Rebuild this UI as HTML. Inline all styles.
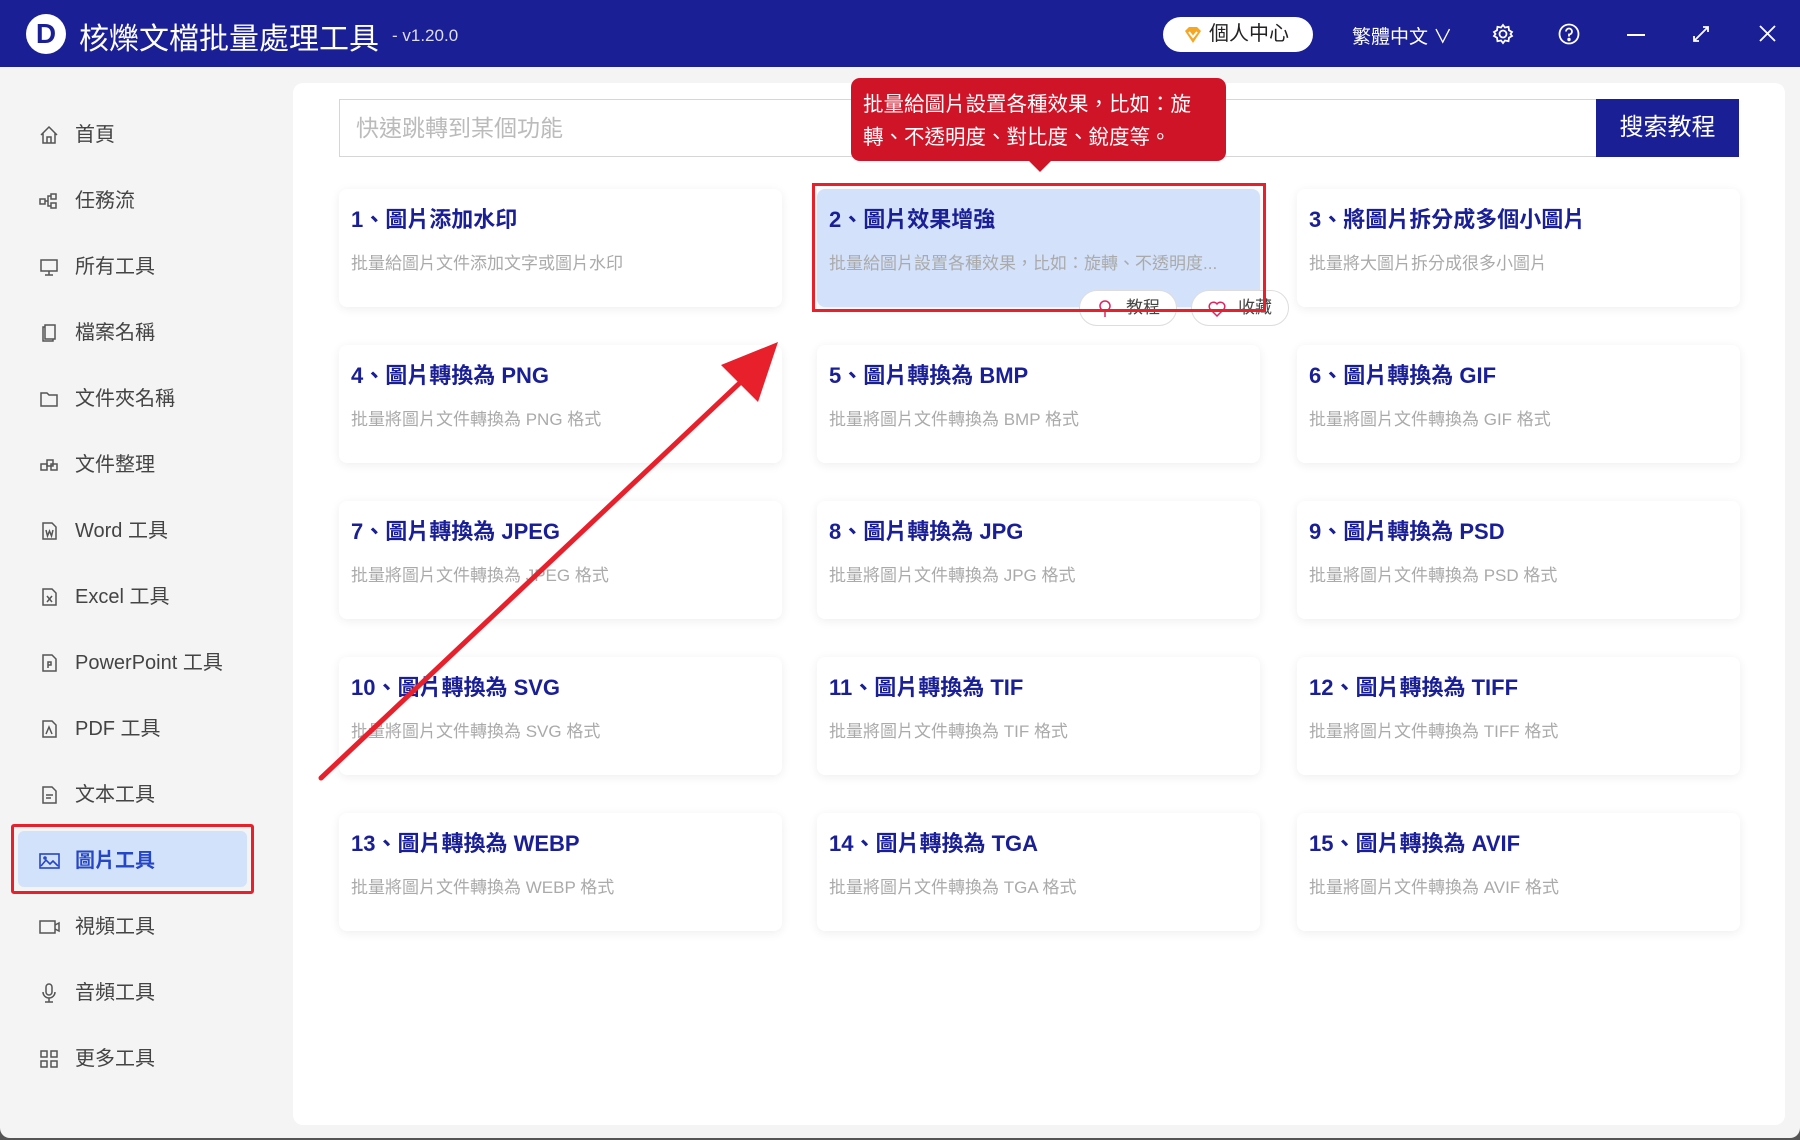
<!DOCTYPE html>
<html><head><meta charset="utf-8"><style>
*{margin:0;padding:0;box-sizing:border-box}
body{width:1800px;height:1140px;overflow:hidden;background:#555;font-family:"Liberation Sans","Noto Sans CJK TC",sans-serif;position:relative}
.win{position:absolute;left:0;top:0;width:1800px;height:1138px;background:#f4f4f4;border-radius:0 0 10px 10px;overflow:hidden}
.hdr{position:absolute;left:0;top:0;width:1800px;height:67px;background:#1a1f96;color:#fff}
.logo{position:absolute;left:26px;top:14px;width:40px;height:40px;border-radius:50%;background:#fff;color:#1a1f96;font-weight:bold;font-size:28px;text-align:center;line-height:40px}
.title{position:absolute;left:79px;top:14px;font-size:30px;color:#fff}
.ver{position:absolute;left:392px;top:26px;font-size:17px;color:#dde}
.pill{position:absolute;left:1163px;top:17px;width:150px;height:35px;border-radius:18px;background:#fff;color:#222;font-size:20px;line-height:35px;padding-left:46px}
.lang{position:absolute;left:1352px;top:22px;font-size:19px;color:#fff}
.side{position:absolute;left:0;top:67px;width:255px;height:1080px}
.it{position:absolute;left:0;width:255px;height:40px;font-size:20px;color:#444;line-height:40px}
.it .t{position:absolute;left:75px}
.it svg{position:absolute;left:39px;top:10px}
.sel{position:absolute;left:11px;top:824px;width:243px;height:70px;border:3px solid #e8202c;border-radius:3px}
.sel div{position:absolute;inset:4px;background:#d3e2fb;border-radius:6px}
.main{position:absolute;left:293px;top:83px;width:1492px;height:1042px;background:#fff;border-radius:10px}
.search{position:absolute;left:339px;top:99px;width:1258px;height:58px;border:1px solid #d6d6d6;border-right:none;font-size:23px;color:#bbb;line-height:56px;padding-left:16px}
.btn{position:absolute;left:1596px;top:99px;width:143px;height:58px;background:#1a1f96;color:#fff;font-size:24px;text-align:center;line-height:58px}
.card{position:absolute;width:443px;height:118px;background:#fff;border-radius:8px;box-shadow:0 2px 10px rgba(0,0,0,.07)}
.card .h{position:absolute;left:12px;top:13px;font-size:22px;font-weight:bold;color:#1a1f96;white-space:nowrap}
.card .d{position:absolute;left:12px;top:60px;font-size:17px;color:#aaa;white-space:nowrap}
.tip{position:absolute;left:851px;top:78px;width:375px;height:83px;background:#d01428;border-radius:9px;color:#fff;font-size:20.5px;line-height:33px;padding:10px 12px}
.tip:after{content:"";position:absolute;left:178px;top:83px;border:11px solid transparent;border-top-color:#d01428;border-bottom:0}
.sb{position:absolute;top:290px;height:36px;width:98px;background:#fff;border:1px solid #ddd;border-radius:18px;font-size:17px;color:#444;line-height:34px;padding-left:46px}
</style></head><body>
<div class="win">
<div class="hdr">
<div class="logo">D</div>
<div class="title">核爍文檔批量處理工具</div>
<div class="ver">- v1.20.0</div>
<div class="pill"><svg style="position:absolute;left:20px;top:8px" width="20" height="20" viewBox="0 0 20 20"><path d="M2 6 L6 2 H14 L18 6 L10 18Z" fill="#f5a623"/><path d="M6 7 L10 12 L14 7" stroke="#fff" stroke-width="2" fill="none"/></svg>個人中心</div>
<div class="lang">繁體中文 ∨</div>
<svg style="position:absolute;left:1492px;top:23px" width="22" height="22" viewBox="0 0 22 22" fill="none" stroke="#fff" stroke-width="1.8"><circle cx="11" cy="11" r="3.5"/><path d="M11 2 L13 4.5 L16.5 3.8 L17 7.3 L20 9 L18.5 11 L20 13 L17 14.7 L16.5 18.2 L13 17.5 L11 20 L9 17.5 L5.5 18.2 L5 14.7 L2 13 L3.5 11 L2 9 L5 7.3 L5.5 3.8 L9 4.5Z"/></svg>
<svg style="position:absolute;left:1558px;top:23px" width="22" height="22" viewBox="0 0 22 22" fill="none" stroke="#fff" stroke-width="1.8"><circle cx="11" cy="11" r="9.5"/><path d="M8 8.5 A3 3 0 1 1 11 11.5 V13.5"/><circle cx="11" cy="16.5" r=".8" fill="#fff"/></svg>
<div style="position:absolute;left:1627px;top:34px;width:18px;height:2px;background:#fff"></div>
<svg style="position:absolute;left:1692px;top:25px" width="18" height="18" viewBox="0 0 18 18" stroke="#fff" stroke-width="1.8" fill="none"><path d="M2 16 L16 2 M11 2 H16 V7 M2 11 V16 H7"/></svg>
<svg style="position:absolute;left:1759px;top:25px" width="17" height="17" viewBox="0 0 17 17" stroke="#fff" stroke-width="1.8"><path d="M1 1 L16 16 M16 1 L1 16"/></svg>
</div>
<div class="sel"><div></div></div>
<div class="side">
<div class="it" style="top:48px"><svg width="20" height="20" viewBox="0 0 20 20" fill="none" stroke="#555" stroke-width="1.5"><path d="M2 10 L10 2 L18 10 M4 8 V18 H16 V8 M8 18 V12 H12 V18"/></svg><span class="t">首頁</span></div>
<div class="it" style="top:114px"><svg width="20" height="20" viewBox="0 0 20 20" fill="none" stroke="#555" stroke-width="1.5"><rect x="1" y="8" width="5" height="5"/><rect x="12" y="3" width="5" height="5"/><rect x="12" y="12" width="5" height="5"/><path d="M6 10 H9 V5 H12 M9 10 V15 H12"/></svg><span class="t">任務流</span></div>
<div class="it" style="top:180px"><svg width="20" height="20" viewBox="0 0 20 20" fill="none" stroke="#555" stroke-width="1.5"><rect x="2" y="3" width="16" height="11"/><path d="M10 14 V18 M6 18 H14"/></svg><span class="t">所有工具</span></div>
<div class="it" style="top:246px"><svg width="20" height="20" viewBox="0 0 20 20" fill="none" stroke="#555" stroke-width="1.5"><path d="M6 4 H4 V18 H14 V16 M6 2 H16 V16 H6Z"/></svg><span class="t">檔案名稱</span></div>
<div class="it" style="top:312px"><svg width="20" height="20" viewBox="0 0 20 20" fill="none" stroke="#555" stroke-width="1.5"><path d="M2 4 H8 L10 6 H18 V17 H2Z"/></svg><span class="t">文件夾名稱</span></div>
<div class="it" style="top:378px"><svg width="20" height="20" viewBox="0 0 20 20" fill="none" stroke="#555" stroke-width="1.5"><rect x="2" y="9" width="6" height="6"/><rect x="8" y="5" width="6" height="6"/><rect x="12" y="9" width="6" height="6"/></svg><span class="t">文件整理</span></div>
<div class="it" style="top:444px"><svg width="20" height="20" viewBox="0 0 20 20" fill="none" stroke="#555" stroke-width="1.5"><path d="M4 2 H13 L17 6 V18 H4Z M7 9 L8.5 15 L10.5 10 L12.5 15 L14 9"/></svg><span class="t">Word 工具</span></div>
<div class="it" style="top:510px"><svg width="20" height="20" viewBox="0 0 20 20" fill="none" stroke="#555" stroke-width="1.5"><path d="M4 2 H13 L17 6 V18 H4Z M8 9 L13 15 M13 9 L8 15"/></svg><span class="t">Excel 工具</span></div>
<div class="it" style="top:576px"><svg width="20" height="20" viewBox="0 0 20 20" fill="none" stroke="#555" stroke-width="1.5"><path d="M4 2 H13 L17 6 V18 H4Z M9 15 V9 H12 V12 H9"/></svg><span class="t">PowerPoint 工具</span></div>
<div class="it" style="top:642px"><svg width="20" height="20" viewBox="0 0 20 20" fill="none" stroke="#555" stroke-width="1.5"><path d="M4 2 H13 L17 6 V18 H4Z M7 15 L10 8 L13 15"/></svg><span class="t">PDF 工具</span></div>
<div class="it" style="top:708px"><svg width="20" height="20" viewBox="0 0 20 20" fill="none" stroke="#555" stroke-width="1.5"><path d="M4 2 H13 L17 6 V18 H4Z M7 10 H14 M7 13 H12"/></svg><span class="t">文本工具</span></div>
<div class="it" style="top:774px;color:#2646c8;font-weight:bold"><svg width="22" height="20" viewBox="0 0 22 20" fill="none" stroke="#2646c8" stroke-width="1.6"><rect x="1" y="3" width="19" height="14"/><path d="M2 15 L7 9 L11 13 L14 10 L19 15"/><circle cx="6" cy="7" r="1"/></svg><span class="t">圖片工具</span></div>
<div class="it" style="top:840px"><svg width="22" height="20" viewBox="0 0 22 20" fill="none" stroke="#555" stroke-width="1.5"><rect x="1" y="4" width="15" height="12"/><path d="M16 8 L20 6 V14 L16 12"/></svg><span class="t">視頻工具</span></div>
<div class="it" style="top:906px"><svg width="20" height="20" viewBox="0 0 20 20" fill="none" stroke="#555" stroke-width="1.5"><rect x="7" y="1" width="6" height="11" rx="3"/><path d="M4 9 A6 6 0 0 0 16 9 M10 15 V19 M6 19 H14"/></svg><span class="t">音頻工具</span></div>
<div class="it" style="top:972px"><svg width="20" height="20" viewBox="0 0 20 20" fill="none" stroke="#555" stroke-width="1.5"><rect x="2" y="2" width="6" height="6"/><rect x="12" y="2" width="6" height="6"/><rect x="2" y="12" width="6" height="6"/><rect x="12" y="12" width="6" height="6"/></svg><span class="t">更多工具</span></div>
</div>
<div class="main"></div>
<div class="search">快速跳轉到某個功能</div>
<div class="btn">搜索教程</div>

<div class="card" style="left:339px;top:189px"><div class="h">1、圖片添加水印</div><div class="d">批量給圖片文件添加文字或圖片水印</div></div>
<div class="card" style="left:817px;top:189px;background:#d3e1fa"><div class="h">2、圖片效果增強</div><div class="d">批量給圖片設置各種效果，比如：旋轉、不透明度...</div></div>
<div class="card" style="left:1297px;top:189px"><div class="h">3、將圖片拆分成多個小圖片</div><div class="d">批量將大圖片拆分成很多小圖片</div></div>
<div class="card" style="left:339px;top:345px"><div class="h">4、圖片轉換為 PNG</div><div class="d">批量將圖片文件轉換為 PNG 格式</div></div>
<div class="card" style="left:817px;top:345px"><div class="h">5、圖片轉換為 BMP</div><div class="d">批量將圖片文件轉換為 BMP 格式</div></div>
<div class="card" style="left:1297px;top:345px"><div class="h">6、圖片轉換為 GIF</div><div class="d">批量將圖片文件轉換為 GIF 格式</div></div>
<div class="card" style="left:339px;top:501px"><div class="h">7、圖片轉換為 JPEG</div><div class="d">批量將圖片文件轉換為 JPEG 格式</div></div>
<div class="card" style="left:817px;top:501px"><div class="h">8、圖片轉換為 JPG</div><div class="d">批量將圖片文件轉換為 JPG 格式</div></div>
<div class="card" style="left:1297px;top:501px"><div class="h">9、圖片轉換為 PSD</div><div class="d">批量將圖片文件轉換為 PSD 格式</div></div>
<div class="card" style="left:339px;top:657px"><div class="h">10、圖片轉換為 SVG</div><div class="d">批量將圖片文件轉換為 SVG 格式</div></div>
<div class="card" style="left:817px;top:657px"><div class="h">11、圖片轉換為 TIF</div><div class="d">批量將圖片文件轉換為 TIF 格式</div></div>
<div class="card" style="left:1297px;top:657px"><div class="h">12、圖片轉換為 TIFF</div><div class="d">批量將圖片文件轉換為 TIFF 格式</div></div>
<div class="card" style="left:339px;top:813px"><div class="h">13、圖片轉換為 WEBP</div><div class="d">批量將圖片文件轉換為 WEBP 格式</div></div>
<div class="card" style="left:817px;top:813px"><div class="h">14、圖片轉換為 TGA</div><div class="d">批量將圖片文件轉換為 TGA 格式</div></div>
<div class="card" style="left:1297px;top:813px"><div class="h">15、圖片轉換為 AVIF</div><div class="d">批量將圖片文件轉換為 AVIF 格式</div></div>

<div class="sb" style="left:1079px"><svg style="position:absolute;left:18px;top:9px" width="14" height="18" viewBox="0 0 14 18" fill="none" stroke="#e0245e" stroke-width="1.5"><circle cx="7" cy="6" r="5"/><path d="M7 11 V17"/></svg>教程</div>
<div class="sb" style="left:1191px"><svg style="position:absolute;left:16px;top:10px" width="18" height="16" viewBox="0 0 18 16" fill="none" stroke="#e0245e" stroke-width="1.5"><path d="M9 15 L2 8 A4 4 0 0 1 9 3 A4 4 0 0 1 16 8Z"/></svg>收藏</div>
<div style="position:absolute;left:812px;top:183px;width:454px;height:129px;border:3px solid #e8202c"></div>
<div class="tip">批量給圖片設置各種效果，比如：旋轉、不透明度、對比度、銳度等。</div>

<svg style="position:absolute;left:0;top:0" width="1800" height="1140"><path d="M321 778 L745 378" stroke="#e8202c" stroke-width="5" stroke-linecap="round"/><path d="M721 365 L778 342 L758 402Z" fill="#e8202c"/></svg>
</div>
</body></html>
